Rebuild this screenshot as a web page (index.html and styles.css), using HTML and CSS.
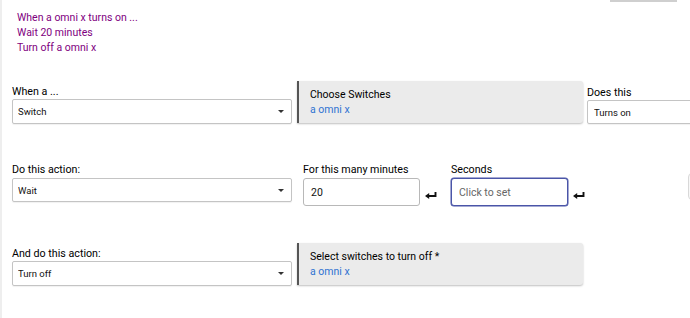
FILE: index.html
```html
<!DOCTYPE html>
<html lang="en">
<head>
<meta charset="UTF-8" />
<meta name="viewport" content="width=device-width, initial-scale=1" />
<title>Rule</title>
<link rel="stylesheet" href="styles.css">
</head>
<body>
<div class="page">
  <div class="topline"></div>

  <div class="summary">
    <div>When a omni x turns on ...</div>
    <div>Wait 20 minutes</div>
    <div>Turn off a omni x</div>
  </div>

  <div class="row row-trigger">
    <div class="field col-main">
      <label>When a ...</label>
      <div class="select-wrap">
        <select><option>Switch</option></select>
      </div>
    </div>
    <div class="device-box">
      <div class="device-title">Choose Switches</div>
      <div class="device-value">a omni x</div>
    </div>
    <div class="field col-does">
      <label>Does this</label>
      <div class="select-wrap plain">
        <select><option>Turns on</option></select>
      </div>
    </div>
  </div>

  <div class="row row-action">
    <div class="field col-main">
      <label>Do this action:</label>
      <div class="select-wrap">
        <select><option>Wait</option></select>
      </div>
    </div>
    <div class="field col-num">
      <label>For this many minutes</label>
      <input type="text" class="num" value="20" />
    </div>
    <svg class="enter" width="12" height="7" viewBox="0 0 12 7">
      <path d="M10.5 0 V4 H3" fill="none" stroke="#111" stroke-width="1.9" />
      <path d="M0 4 L4.2 1 V7 Z" fill="#111" />
    </svg>
    <div class="field col-num col-sec">
      <label>Seconds</label>
      <input type="text" class="num active" placeholder="Click to set" />
    </div>
    <svg class="enter" width="12" height="7" viewBox="0 0 12 7">
      <path d="M10.5 0 V4 H3" fill="none" stroke="#111" stroke-width="1.9" />
      <path d="M0 4 L4.2 1 V7 Z" fill="#111" />
    </svg>
    <div class="side-btn"></div>
  </div>

  <div class="row row-off">
    <div class="field col-main">
      <label>And do this action:</label>
      <div class="select-wrap">
        <select><option>Turn off</option></select>
      </div>
    </div>
    <div class="device-box">
      <div class="device-title">Select switches to turn off *</div>
      <div class="device-value">a omni x</div>
    </div>
  </div>
</div>
</body>
</html>
```

FILE: styles.css
```css
* {
  box-sizing: border-box;
}
body {
  margin: 0;
  width: 690px;
  height: 318px;
  overflow: hidden;
  background: #fff;
  font-family: Roboto, "Liberation Sans", sans-serif;
  color: #111;
}
.page {
  border-left: 2px solid #eeeeee;
  height: 318px;
}
.topline {
  width: 67px;
  height: 2px;
  margin-left: 608px;
  background: #cfcfcf;
}
.summary {
  margin-top: 8px;
  padding-left: 15px;
  font-size: 10.5px;
  line-height: 15px;
  color: #800080;
}
.row {
  display: flex;
  padding-left: 10px;
}
.row > * {
  flex: none;
}
.row-trigger {
  margin-top: 26px;
  align-items: flex-end;
}
.row-action {
  margin-top: 39px;
  align-items: flex-start;
}
.row-off {
  margin-top: 37px;
  align-items: flex-end;
}
.field label {
  display: block;
  font-size: 10.7px;
  line-height: 14px;
  color: #000;
  white-space: nowrap;
}
.col-main {
  width: 280px;
}
.row-action .field label {
  margin-bottom: 1px;
}
.select-wrap {
  position: relative;
}
.select-wrap select {
  appearance: none;
  -webkit-appearance: none;
  width: 100%;
  height: 25px;
  padding: 0 5px;
  border: 1px solid #c4c4c4;
  border-radius: 2px;
  background: #fff;
  font-family: Roboto, "Liberation Sans", sans-serif;
  font-size: 9.5px;
  color: #111;
  box-shadow: 0 1px 1px rgba(0, 0, 0, 0.06);
}
.select-wrap::after {
  content: "";
  position: absolute;
  right: 8px;
  top: 11px;
  border-left: 3.5px solid transparent;
  border-right: 3.5px solid transparent;
  border-top: 3.5px solid #333;
}
.select-wrap.plain::after {
  display: none;
}
.row-action .select-wrap select {
  height: 24px;
}
.device-box {
  width: 286px;
  height: 42px;
  margin-left: 5px;
  margin-bottom: 1px;
  padding: 7px 11px;
  background: #ebebeb;
  border-left: 2px solid #555;
  border-radius: 0 3px 3px 0;
  box-shadow: 0 1px 2px rgba(0, 0, 0, 0.25);
  font-size: 10.5px;
  line-height: 14.5px;
}
.device-title {
  color: #000;
}
.device-value {
  color: #2f73d2;
}
.col-does {
  width: 130px;
  margin-left: 4px;
}
.col-does select {
  height: 24px;
  padding: 0 6px;
}
.col-num {
  width: 117px;
  margin-left: 11px;
}
.col-sec {
  margin-left: 14px;
}
.num {
  width: 117px;
  height: 28px;
  padding: 0 7px;
  border: 1px solid #b8b8b8;
  border-radius: 3px;
  font-family: Roboto, "Liberation Sans", sans-serif;
  font-size: 10.5px;
  color: #111;
  outline: none;
}
.num.active {
  border-color: #4a55a8;
  box-shadow: 0 0 0 0.5px #4a55a8;
}
.num::placeholder {
  color: #666;
}
.enter {
  margin-left: 5px;
  margin-top: 29px;
}
.side-btn {
  width: 30px;
  height: 27px;
  margin-left: 103px;
  margin-top: 10px;
  border: 1px solid #d8d8d8;
  border-radius: 4px;
  background: #f7f7f7;
}
```
